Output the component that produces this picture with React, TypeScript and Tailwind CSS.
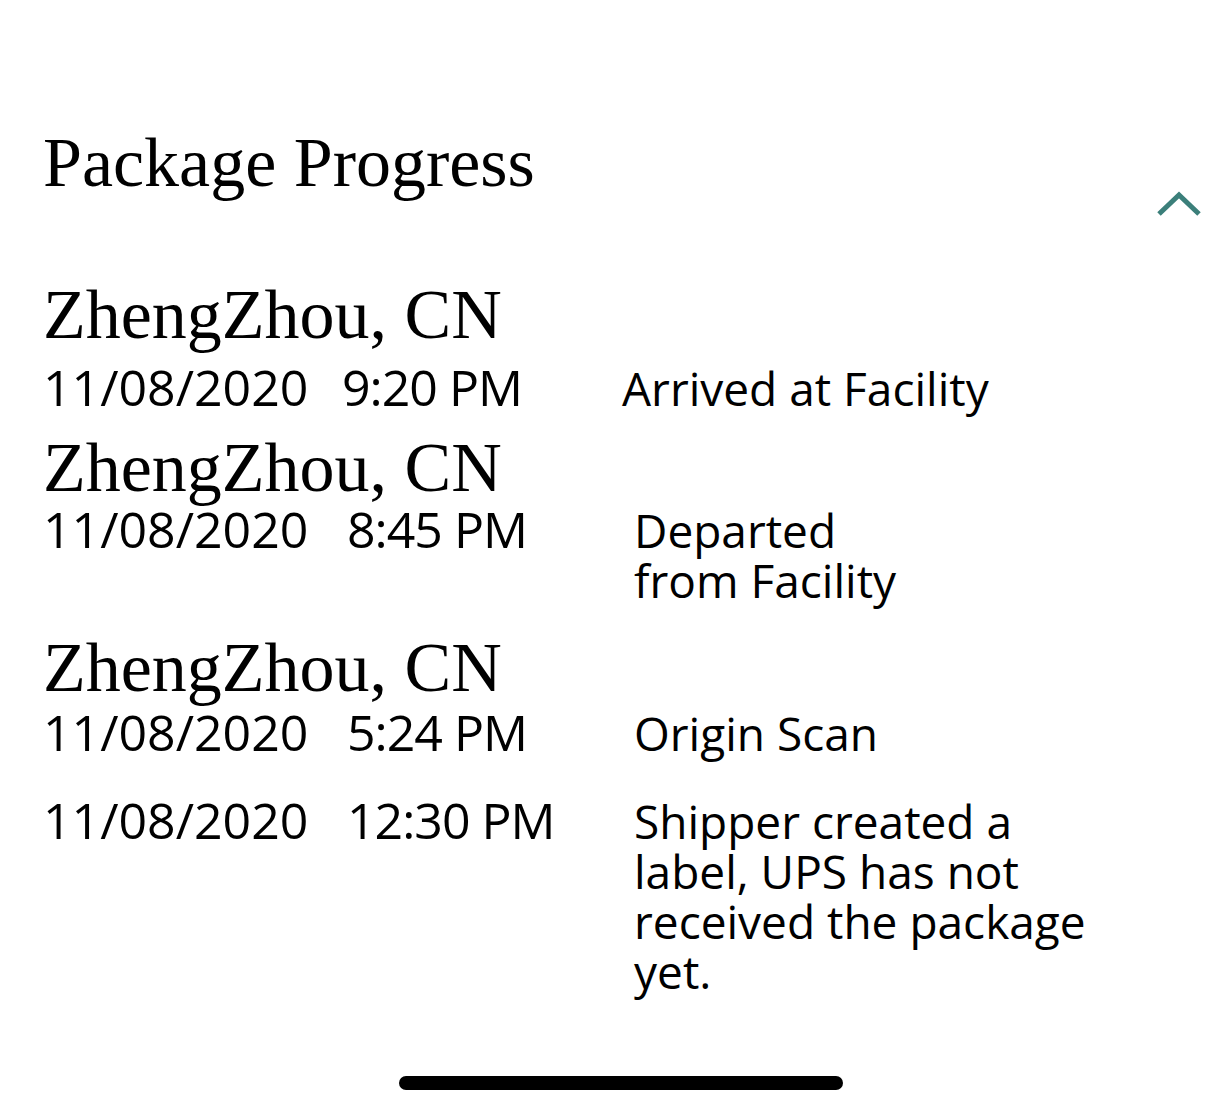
import React from 'react';

type Scan = {
  city?: string;
  date: string;
  time: string;
  lines: string[];
  cityClass?: string;
  rowClass: string;
  dateCol: string;
  timeCol: string;
};

const scans: Scan[] = [
  {
    city: 'ZhengZhou, CN',
    date: '11/08/2020',
    time: '9:20 PM',
    lines: ['Arrived at Facility'],
    cityClass: 'mt-[82px]',
    rowClass: 'mt-[12px]',
    dateCol: 'w-[299px]',
    timeCol: 'w-[280px]',
  },
  {
    city: 'ZhengZhou, CN',
    date: '11/08/2020',
    time: '8:45 PM',
    lines: ['Departed', 'from Facility'],
    cityClass: 'mt-[20px]',
    rowClass: 'mt-[1px]',
    dateCol: 'w-[304px]',
    timeCol: 'w-[287px]',
  },
  {
    city: 'ZhengZhou, CN',
    date: '11/08/2020',
    time: '5:24 PM',
    lines: ['Origin Scan'],
    cityClass: 'mt-[28px]',
    rowClass: 'mt-[4px]',
    dateCol: 'w-[304px]',
    timeCol: 'w-[287px]',
  },
  {
    date: '11/08/2020',
    time: '12:30 PM',
    lines: ['Shipper created a', 'label, UPS has not', 'received the package', 'yet.'],
    rowClass: 'mt-[37px]',
    dateCol: 'w-[304px]',
    timeCol: 'w-[287px]',
  },
];

const ChevronUp = () => (
  <svg width="46" height="28" viewBox="0 0 46 28" fill="none">
    <polyline points="3,24 23,5 43,24" stroke="#3b7f7a" strokeWidth="5" strokeLinejoin="miter" />
  </svg>
);

export default function App() {
  return (
    <div className="min-h-[1115px] w-[1221px] bg-white text-black relative">
      <div className="pl-[43px] pr-[19px] pt-[128px]">
        <div className="flex justify-between items-start h-[70px]">
          <h1 className="font-['Liberation_Serif',serif] text-[70px] leading-[70px]">Package Progress</h1>
          <div className="mt-[62px] shrink-0">
            <ChevronUp />
          </div>
        </div>

        {scans.map((s, i) => (
          <div key={i}>
            {s.city && (
              <div className={`font-['Liberation_Serif',serif] text-[70px] leading-[70px] ${s.cityClass}`}>
                {s.city}
              </div>
            )}
            <div className={`flex items-baseline font-['Open_Sans',sans-serif] ${s.rowClass}`}>
              <div className={`${s.dateCol} text-[50px] leading-[50px] shrink-0`}>{s.date}</div>
              <div className={`${s.timeCol} text-[50px] leading-[50px] tracking-[-1px] shrink-0`}>{s.time}</div>
              <div className="text-[46px] leading-[50px]">
                {s.lines.map((l, j) => (
                  <div key={j}>{l}</div>
                ))}
              </div>
            </div>
          </div>
        ))}
      </div>

      <div className="absolute left-[399px] top-[1076px] w-[444px] h-[14px] rounded-full bg-black" />
    </div>
  );
}
